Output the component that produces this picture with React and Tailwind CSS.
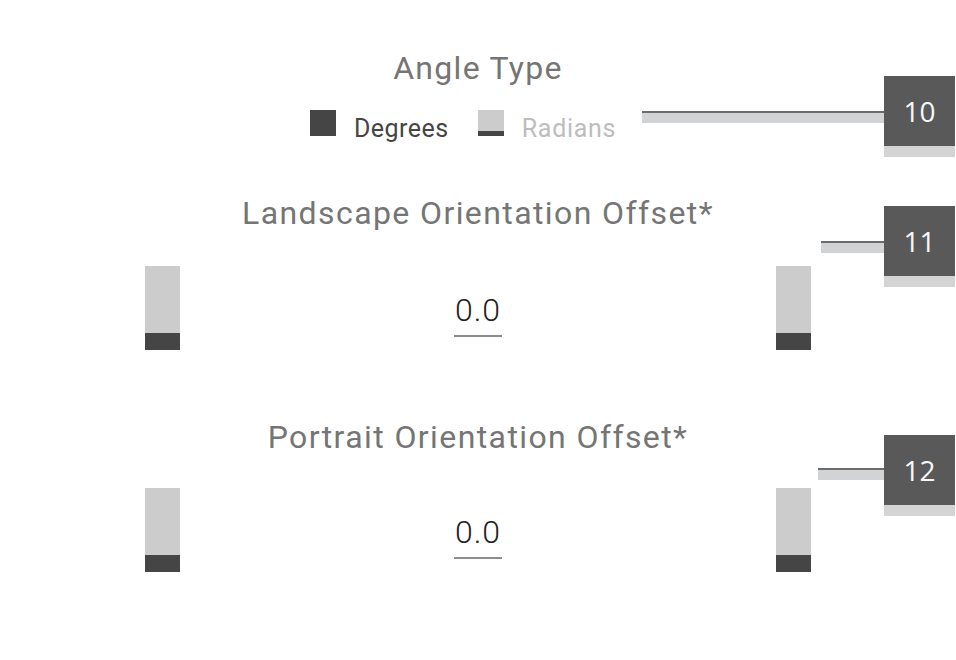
import React from "react";

function Badge({ n, top, lineLeft, lineTop }) {
  return (
    <>
      <div
        className="absolute flex flex-col"
        style={{ left: lineLeft, top: lineTop, width: 884 - lineLeft }}
      >
        <div className="h-[2px] bg-[#6c6c6c]" />
        <div className="h-[10px] bg-[#d2d3d4]" />
      </div>
      <div className="absolute left-[884px] w-[71px] flex flex-col" style={{ top }}>
        <div
          className="h-[70px] bg-[#595959] flex items-center justify-center text-[28px] text-[#f7f7f7]"
          style={{ fontFamily: '"Open Sans", sans-serif' }}
        >
          {n}
        </div>
        <div className="h-[11px] bg-[#d4d4d4]" />
      </div>
    </>
  );
}

function Bar() {
  return (
    <div className="w-[35px] h-[84px] flex flex-col">
      <div className="h-[67px] bg-[#cccccc]" />
      <div className="h-[17px] bg-[#454545]" />
    </div>
  );
}

function ValueRow() {
  return (
    <div className="w-[666px] h-[84px] flex justify-between items-start">
      <Bar />
      <div className="flex flex-col items-center pt-[25px]">
        <div className="text-[32px] leading-[38px] text-[#222222] tracking-[1px] font-light">0.0</div>
        <div className="w-[48px] h-[2px] bg-[#8c8c8c] mt-[6px]" />
      </div>
      <Bar />
    </div>
  );
}

export default function App() {
  return (
    <div
      className="relative w-[956px] h-[660px] bg-white overflow-hidden"
      style={{ fontFamily: 'Roboto, "Noto Sans", sans-serif' }}
    >
      <div className="flex flex-col items-center pt-[50px]">
        <div className="text-[32px] leading-[36px] text-[#757575] tracking-[1.3px]">Angle Type</div>
        <div className="mt-[24px] h-[26px] flex items-end pr-[30px]">
          <div className="w-[26px] h-[26px] bg-[#454545]" />
          <div className="ml-[18px] text-[25px] leading-[25px] text-[#454545] mb-[-5px] tracking-[0.5px]">Degrees</div>
          <div className="ml-[29px] w-[26px] h-[26px] flex flex-col">
            <div className="h-[21px] bg-[#cccccc]" />
            <div className="h-[5px] bg-[#454545]" />
          </div>
          <div className="ml-[18px] text-[25px] leading-[25px] text-[#bdbdbd] mb-[-5px] tracking-[0.7px]">Radians</div>
        </div>
        <div className="mt-[59px] text-[32px] leading-[36px] text-[#757575] tracking-[1.4px]">
          Landscape Orientation Offset*
        </div>
        <div className="mt-[35px]">
          <ValueRow />
        </div>
        <div className="mt-[69px] text-[32px] leading-[36px] text-[#757575] tracking-[1.4px]">
          Portrait Orientation Offset*
        </div>
        <div className="mt-[33px]">
          <ValueRow />
        </div>
      </div>

      <Badge n="10" top={76} lineLeft={642} lineTop={111} />
      <Badge n="11" top={206} lineLeft={821} lineTop={241} />
      <Badge n="12" top={435} lineLeft={818} lineTop={468} />
    </div>
  );
}
